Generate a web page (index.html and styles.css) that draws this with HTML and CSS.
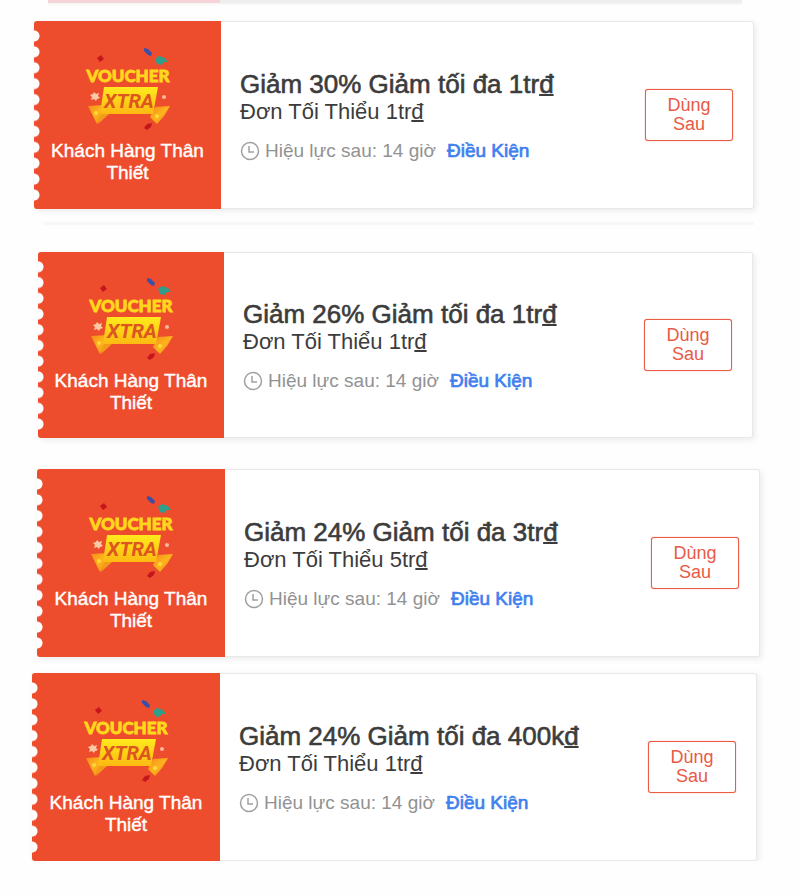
FILE: index.html
```html
<!DOCTYPE html>
<html lang="vi">
<head>
    <meta charset="UTF-8">
    <meta name="viewport" content="width=device-width, initial-scale=1.0">
    <title>Voucher</title>
    <link rel="stylesheet" href="styles.css">
</head>
<body>
    <svg class="sprite" aria-hidden="true">
        <defs>
            <linearGradient id="gold" x1="0" y1="0" x2="0" y2="1">
                <stop offset="0" stop-color="#ffea1c"/>
                <stop offset="1" stop-color="#fdb913"/>
            </linearGradient>
            <linearGradient id="tail" x1="0" y1="0" x2="1" y2="1">
                <stop offset="0" stop-color="#f58a1c"/>
                <stop offset="0.5" stop-color="#fdb41c"/>
                <stop offset="1" stop-color="#f0801c"/>
            </linearGradient>
        </defs>
        <symbol id="banner" viewBox="0 0 88 88">
            <path d="M13 12l4-3 3 4-4 3z" fill="#c4161c"/>
            <path d="M60 2l4 1 4 4-1 3-3-1-4-4z" fill="#3c4fa8"/>
            <path d="M71 13l4-3 6 2 3 4-4 0-3 3-4-1z" fill="#2f9e8b"/>
            <path d="M60 82l3-4 5-1-1 4-4 3z" fill="#c4161c"/>
            <path d="M4 60l17-1-2 11-6 8-4-8z" fill="url(#tail)"/>
            <path d="M86 60l-15 1-5 10 7 7 7-8z" fill="url(#tail)"/>
            <path d="M20 60l-6 18 11-10z" fill="#f39a1a"/>
            <path d="M20 41h54l-5 27H16z" fill="url(#gold)"/>
            <circle cx="12" cy="67" r="2" fill="#ffd83a"/>
            <circle cx="73" cy="70" r="2" fill="#ffd83a"/>
            <path d="M10 46l2 2 3-1-1 3 2 2-3 1-1 2-2-2-3 1 1-3-2-2 3-1z" fill="#fbc9a4"/>
            <circle cx="80" cy="51" r="2" fill="#fbb6a0"/>
        </symbol>
        <symbol id="clock" viewBox="0 0 20 20">
            <circle cx="10" cy="10" r="8.5" fill="none" stroke="#a0a0a0" stroke-width="1.5"/>
            <path d="M9 5v6h5" fill="none" stroke="#a0a0a0" stroke-width="1.5"/>
        </symbol>
    </svg>

    <main class="list">
        <div class="previous"></div>

        <div class="voucher first">
            <div class="brand">
                <svg class="logo" viewBox="0 0 88 88">
                    <use href="#banner"/>
                    <text x="44" y="36" class="logo-top">VOUCHER</text>
                    <text x="45" y="62" class="logo-bottom">XTRA</text>
                </svg>
                <p>Khách Hàng Thân Thiết</p>
            </div>
            <div class="info">
                <h2>Giảm 30% Giảm tối đa 1tr<u>đ</u></h2>
                <p class="minimum">Đơn Tối Thiểu 1tr<u>đ</u></p>
                <p class="validity"><svg class="clock"><use href="#clock"/></svg>Hiệu lực sau: 14 giờ <a href="#">Điều Kiện</a></p>
            </div>
            <button type="button">Dùng Sau</button>
        </div>

        <hr class="line">

        <div class="voucher second">
            <div class="brand">
                <svg class="logo" viewBox="0 0 88 88">
                    <use href="#banner"/>
                    <text x="44" y="36" class="logo-top">VOUCHER</text>
                    <text x="45" y="62" class="logo-bottom">XTRA</text>
                </svg>
                <p>Khách Hàng Thân Thiết</p>
            </div>
            <div class="info">
                <h2>Giảm 26% Giảm tối đa 1tr<u>đ</u></h2>
                <p class="minimum">Đơn Tối Thiểu 1tr<u>đ</u></p>
                <p class="validity"><svg class="clock"><use href="#clock"/></svg>Hiệu lực sau: 14 giờ <a href="#">Điều Kiện</a></p>
            </div>
            <button type="button">Dùng Sau</button>
        </div>

        <div class="voucher third">
            <div class="brand">
                <svg class="logo" viewBox="0 0 88 88">
                    <use href="#banner"/>
                    <text x="44" y="36" class="logo-top">VOUCHER</text>
                    <text x="45" y="62" class="logo-bottom">XTRA</text>
                </svg>
                <p>Khách Hàng Thân Thiết</p>
            </div>
            <div class="info">
                <h2>Giảm 24% Giảm tối đa 3tr<u>đ</u></h2>
                <p class="minimum">Đơn Tối Thiểu 5tr<u>đ</u></p>
                <p class="validity"><svg class="clock"><use href="#clock"/></svg>Hiệu lực sau: 14 giờ <a href="#">Điều Kiện</a></p>
            </div>
            <button type="button">Dùng Sau</button>
        </div>

        <div class="voucher fourth">
            <div class="brand">
                <svg class="logo" viewBox="0 0 88 88">
                    <use href="#banner"/>
                    <text x="44" y="36" class="logo-top">VOUCHER</text>
                    <text x="45" y="62" class="logo-bottom">XTRA</text>
                </svg>
                <p>Khách Hàng Thân Thiết</p>
            </div>
            <div class="info">
                <h2>Giảm 24% Giảm tối đa 400k<u>đ</u></h2>
                <p class="minimum">Đơn Tối Thiểu 1tr<u>đ</u></p>
                <p class="validity"><svg class="clock"><use href="#clock"/></svg>Hiệu lực sau: 14 giờ <a href="#">Điều Kiện</a></p>
            </div>
            <button type="button">Dùng Sau</button>
        </div>
    </main>
</body>
</html>
```
FILE: styles.css
```css
* {
    box-sizing: border-box;
}
body {
    margin: 0;
    background-color: #fefefe;
    font-family: "Liberation Sans", Arial, sans-serif;
    color: #3c3c3c;
}
h2, p {
    margin: 0;
}
.sprite {
    position: absolute;
    width: 0;
    height: 0;
}
.list {
    display: flex;
    flex-direction: column;
}
.previous {
    height: 3px;
    margin: 0 58px 18px 48px;
    background: linear-gradient(to right, #f6d3d6 172px, #eeeeee 172px);
    box-shadow: 0 1px 3px rgba(0, 0, 0, 0.06);
}
.voucher {
    display: flex;
    align-items: center;
    min-height: 188px;
    padding-right: 20px;
    background-color: #ffffff;
    border: 1px solid #e8e8e8;
    border-left: none;
    border-radius: 3px;
    box-shadow: 2px 2px 6px rgba(0, 0, 0, 0.08);
}
.first {
    margin: 0 46px 0 34px;
}
.second {
    min-height: 186px;
    margin: 0 47px 31px 38px;
}
.third {
    margin: 0 40px 16px 37px;
}
.fourth {
    margin: 0 43px 0 32px;
}
.line {
    width: auto;
    height: 3px;
    margin: 13px 46px 27px 44px;
    border: none;
    background-color: #f7f7f7;
}
.brand {
    position: relative;
    align-self: stretch;
    display: flex;
    flex-direction: column;
    align-items: center;
    justify-content: center;
    gap: 6px;
    flex: 0 0 187px;
    margin: -1px 0;
    padding: 0 12px;
    background-color: #ee4d2d;
    border-radius: 3px 0 0 3px;
    color: #ffffff;
    font-size: 19px;
    line-height: 22px;
    text-align: center;
    -webkit-text-stroke: 0.4px #ffffff;
}
.second .brand {
    flex-basis: 186px;
}
.third .brand, .fourth .brand {
    flex-basis: 188px;
}
/* ticket edge */
.brand::before {
    content: "";
    position: absolute;
    top: 7px;
    bottom: 6px;
    left: 0;
    width: 6px;
    background-image: radial-gradient(circle at 0 50%, #fefefe 5px, transparent 6px);
    background-size: 6px 16px;
    background-repeat: no-repeat round;
}
.logo {
    width: 88px;
    height: 88px;
}
.logo-top {
    fill: #ffd71c;
    stroke: #ffd71c;
    stroke-width: 0.8;
    font: 900 17px Lato, sans-serif;
    text-anchor: middle;
}
.logo-bottom {
    fill: #dd551f;
    font: italic bold 20px Roboto, sans-serif;
    text-anchor: middle;
}
.info {
    flex: 1;
    padding-left: 19px;
}
.info h2 {
    font-size: 26px;
    font-weight: normal;
    line-height: 30px;
    -webkit-text-stroke: 0.6px #3c3c3c;
}
.info u {
    text-decoration-thickness: 2px;
    text-decoration-skip-ink: none;
}
.minimum {
    font-size: 22px;
    line-height: 26px;
}
.validity {
    display: flex;
    align-items: center;
    margin-top: 15px;
    color: #929292;
    font-size: 19px;
    line-height: 22px;
}
.clock {
    width: 20px;
    height: 20px;
    margin-right: 5px;
}
.validity a {
    margin-left: 11px;
    color: #4080ee;
    text-decoration: none;
    -webkit-text-stroke: 0.7px #4080ee;
}
button {
    width: 88px;
    padding: 6px 20px;
    background-color: #ffffff;
    border: 1px solid #ea5a45;
    border-radius: 3px;
    box-shadow: 0 0 1px #ea5a45;
    color: #ea5a45;
    font-family: inherit;
    font-size: 18px;
    line-height: 19px;
    cursor: pointer;
}
```
